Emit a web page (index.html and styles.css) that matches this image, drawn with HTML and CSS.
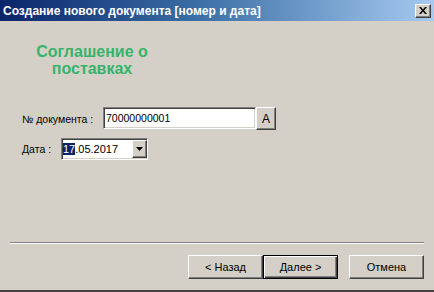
FILE: index.html
```html
<!DOCTYPE html>
<html lang="ru">
<head>
<meta charset="utf-8">
<title>Создание нового документа</title>
<link rel="stylesheet" href="styles.css">
</head>
<body>
<div class="window">
  <div class="titlebar">
    <span class="title">Создание нового документа [номер и дата]</span>
    <span class="close">
      <svg width="8" height="7" viewBox="0 0 8 7"><path d="M0 0h2l2 2.5L6 0h2L5 3.5 8 7H6L4 4.5 2 7H0l3-3.5z" fill="#000"/></svg>
    </span>
  </div>
  <div class="content">
    <div class="heading">Соглашение о<br>поставках</div>
    <div class="row row-doc">
      <span class="label">№ документа :</span>
      <span class="field field-doc">70000000001</span>
      <span class="btn3d btn-a">A</span>
    </div>
    <div class="row row-date">
      <span class="label">Дата :</span>
      <span class="field field-date"><span class="sel">17</span>.05.2017<span class="btn3d drop"><svg width="7" height="4" viewBox="0 0 7 4"><path d="M0 0h7L3.5 4z" fill="#000"/></svg></span></span>
    </div>
    <div class="footer">
      <div class="separator"></div>
      <div class="buttons">
        <span class="btn3d wbtn">&lt; Назад</span>
        <span class="btn3d wbtn default">Далее &gt;</span>
        <span class="btn3d wbtn cancel">Отмена</span>
      </div>
    </div>
  </div>
</div>
</body>
</html>
```

FILE: styles.css
```css
html, body {
  margin: 0;
  padding: 0;
}
body {
  width: 434px;
  height: 292px;
  overflow: hidden;
  font-family: "Liberation Sans", Arial, sans-serif;
  font-size: 11px;
  color: #000;
  background: #d4d0c8;
}
.window {
  width: 434px;
  height: 292px;
  box-sizing: border-box;
  display: flex;
  flex-direction: column;
  background: #d4d0c8;
  border-bottom: 2px solid #404040;
}
.titlebar {
  height: 21px;
  flex: none;
  display: flex;
  align-items: center;
  justify-content: space-between;
  padding: 0 3px 0 3px;
  background: linear-gradient(to right, #0a246a 0%, #3a6ea5 45%, #a6caf0 100%);
}
.title {
  color: #fff;
  font-weight: bold;
  font-size: 12px;
  white-space: nowrap;
}
.close {
  width: 16px;
  height: 14px;
  box-sizing: border-box;
  display: flex;
  align-items: center;
  justify-content: center;
  background: #d4d0c8;
  border: 1px solid;
  border-color: #fff #404040 #404040 #fff;
  box-shadow: inset -1px -1px 0 #808080;
}
.content {
  flex: 1;
  display: flex;
  flex-direction: column;
}
.heading {
  width: 184px;
  margin-top: 22px;
  text-align: center;
  color: #36b46c;
  font-weight: bold;
  font-size: 16px;
  line-height: 17px;
}
.row {
  display: flex;
  align-items: center;
  padding-left: 22px;
  font-size: 10.5px;
}
.row-doc {
  margin-top: 30px;
  height: 23px;
}
.row-date {
  margin-top: 8px;
  height: 22px;
}
.label {
  white-space: nowrap;
}
.row-doc .label {
  width: 81px;
}
.row-date .label {
  width: 39px;
}
.field {
  box-sizing: border-box;
  height: 22px;
  display: flex;
  align-items: center;
  background: #fff;
  border: 1px solid;
  border-color: #808080 #fff #fff #808080;
  box-shadow: inset 1px 1px 0 #404040, inset -1px -1px 0 #d4d0c8;
  padding-left: 2px;
  font-size: 11px;
}
.field-doc {
  width: 153px;
  align-self: flex-start;
  font-size: 10.5px;
}
.field-date {
  width: 87px;
  padding-left: 1px;
}
.sel {
  background: #0a246a;
  color: #fff;
}
.btn3d {
  box-sizing: border-box;
  display: flex;
  align-items: center;
  justify-content: center;
  background: #d4d0c8;
  border: 1px solid;
  border-color: #fff #404040 #404040 #fff;
  box-shadow: inset -1px -1px 0 #808080;
}
.btn-a {
  width: 20px;
  height: 23px;
  font-size: 12px;
}
.drop {
  width: 15px;
  height: 18px;
  margin-left: auto;
}
.footer {
  margin-top: auto;
  display: flex;
  flex-direction: column;
}
.separator {
  margin: 0 10px;
  border-top: 1px solid #808080;
  border-bottom: 1px solid #fff;
  height: 0;
}
.buttons {
  display: flex;
  justify-content: flex-end;
  padding: 11px 10px 11px 0;
}
.wbtn {
  width: 75px;
  height: 24px;
}
.default {
  border: 1px solid #000;
  box-shadow: inset 1px 1px 0 #fff, inset -1px -1px 0 #404040, inset -2px -2px 0 #808080;
}
.cancel {
  margin-left: 11px;
}
```
